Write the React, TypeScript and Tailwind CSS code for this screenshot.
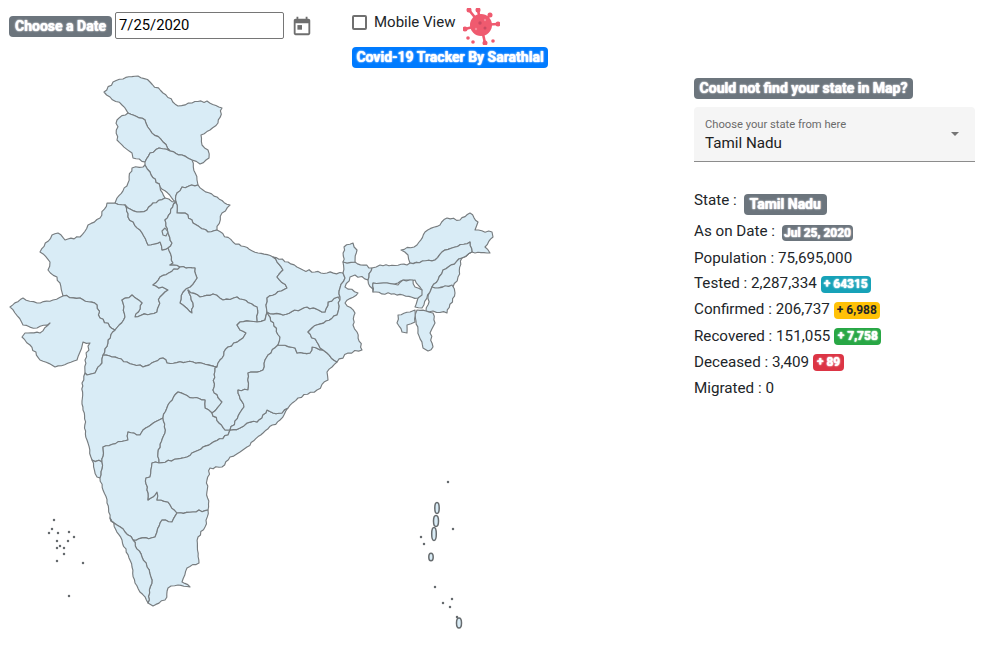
import React from "react";

type P = [number, number];
const parse = (s: string): P[] =>
  s.trim().split(/\s+/).map((t) => t.split(",").map(Number) as P);

const rnd = (a: number, b: number) => {
  const s = Math.sin(a * 12.9898 + b * 78.233) * 43758.5453;
  return s - Math.floor(s);
};

function edge(p: P, q: P): P[] {
  const rev = p[0] > q[0] || (p[0] === q[0] && p[1] > q[1]);
  const [a, b] = rev ? [q, p] : [p, q];
  const dx = b[0] - a[0];
  const dy = b[1] - a[1];
  const d = Math.hypot(dx, dy);
  const n = Math.max(1, Math.floor(d / 3));
  const out: P[] = [];
  for (let i = 1; i < n; i++) {
    const t = i / n;
    const o = (rnd(a[0] + b[0] * 3 + i, a[1] + b[1] * 7 + i) - 0.5) * 2.2;
    out.push([a[0] + dx * t - (dy / d) * o, a[1] + dy * t + (dx / d) * o]);
  }
  return rev ? out.reverse() : out;
}

function toPath(s: string) {
  const pts = parse(s);
  let d = `M${pts[0][0]} ${pts[0][1]}`;
  pts.forEach((p, i) => {
    const q = pts[(i + 1) % pts.length];
    edge(p, q).forEach((m) => (d += `L${m[0].toFixed(1)} ${m[1].toFixed(1)}`));
    d += `L${q[0]} ${q[1]}`;
  });
  return d + "Z";
}

const states: string[] = [
  // Ladakh / J&K
  "104,92 113,82 123,79 138,76 150,82 163,93 178,106 192,103 207,101 222,108 218,123 210,130 201,135 202,145 208,150 209,158 200,164 192,160 182,155 170,151 163,142 150,130 145,120 128,113 122,105 110,97",
  // J&K lower
  "128,113 145,120 150,130 163,142 170,151 159,148 150,153 145,162 133,158 132,153 117,140 117,120",
  // Himachal
  "150,153 159,148 170,151 182,155 192,160 197,180 198,185 182,187 177,193 176,202 160,187 150,172 145,165 145,162",
  // Punjab
  "145,165 150,172 160,187 165,198 153,203 147,210 137,212 125,205 115,203 117,198 128,183 132,168 143,167",
  // Uttarakhand
  "176,202 177,193 182,187 198,185 203,190 217,197 230,205 222,213 217,230 208,232 193,223 185,213 177,213",
  // Rajasthan
  "115,203 107,203 100,218 88,225 80,237 65,240 58,233 52,235 40,252 50,262 48,270 57,277 63,296 80,298 97,305 100,318 115,330 125,317 122,300 132,295 142,303 135,317 157,312 160,297 168,290 153,285 160,277 180,267 170,265 173,263 168,248 162,250 160,242 148,245 140,230 128,217 125,205",
  // Haryana
  "125,205 137,212 147,210 153,203 165,198 176,202 165,220 172,243 168,248 162,250 160,242 148,245 140,230 128,217",
  // Uttar Pradesh
  "176,202 177,213 185,213 193,223 208,232 217,230 233,242 258,253 273,257 283,270 277,277 287,288 267,298 267,312 265,320 257,322 257,307 237,297 223,300 213,294 200,297 188,290 193,303 192,313 180,303 183,292 190,287 197,278 195,268 180,267 170,265 173,263 168,248 172,243 165,220",
  // Madhya Pradesh
  "115,330 125,317 122,300 132,295 142,303 135,317 157,312 160,297 168,290 153,285 160,277 180,267 195,268 197,278 190,287 183,292 180,303 192,313 193,303 188,290 200,297 213,294 223,300 237,297 257,307 257,322 240,322 237,325 240,330 246,333 243,338 240,340 228,347 220,360 217,367 193,362 167,363 163,358 143,367 127,362 112,357 103,355 108,340",
  // Gujarat
  "10,307 23,298 37,303 53,300 63,296 80,298 97,305 100,318 115,330 108,340 103,355 102,363 95,373 87,375 85,373 85,360 90,343 83,342 80,352 77,360 55,367 40,360 30,345 22,337 25,333 40,333 50,323 37,328 23,325 15,313",
  // Maharashtra
  "103,355 112,357 127,362 143,367 163,358 167,363 193,362 217,367 215,368 213,390 222,402 212,413 205,408 205,400 193,398 178,392 168,405 163,418 143,430 140,435 128,432 128,440 103,447 102,462 92,460 87,440 83,410 82,383 85,373 87,375 95,373 102,363",
  // Goa
  "92,460 102,462 100,478 97,477",
  // Karnataka
  "100,478 107,503 110,518 125,532 133,540 155,537 157,532 162,520 172,522 177,513 168,502 157,500 157,492 148,500 147,490 146,478 150,477 152,463 159,463 158,453 165,433 163,418 143,430 140,435 128,432 128,440 103,447 102,462",
  // Telangana
  "212,413 205,408 205,400 193,398 178,392 168,405 163,418 165,433 158,453 159,463 187,457 203,447 228,435 230,430 225,430",
  // Andhra Pradesh
  "159,463 187,457 203,447 228,435 230,430 240,428 247,423 257,422 267,410 273,413 282,413 288,408 280,420 263,433 247,447 240,452 230,457 222,467 210,468 207,480 208,510 193,512 177,513 168,502 157,500 157,492 148,500 147,490 146,478 150,477 152,463",
  // Tamil Nadu
  "177,513 193,512 208,510 205,527 198,537 199,563 187,568 182,582 190,587 178,585 168,588 165,600 153,606 148,603 152,580 147,567 142,557 133,540 155,537 157,532 162,520 172,522",
  // Kerala
  "110,518 122,540 132,567 135,583 148,603 152,580 147,567 142,557 133,540 125,532",
  // Chhattisgarh
  "267,312 280,337 278,345 268,355 265,360 263,370 248,373 248,390 238,390 244,407 230,430 225,430 212,413 222,402 213,390 215,368 217,367 220,360 228,347 240,340 243,338 246,333 240,330 237,325 240,322 257,322 265,320",
  // Odisha
  "278,345 295,348 297,353 310,353 312,347 323,350 327,353 337,362 327,372 328,380 317,390 298,398 288,408 282,413 273,413 267,410 257,422 247,423 240,428 230,430 244,407 238,390 248,390 248,373 263,370 265,360 268,355",
  // Jharkhand
  "267,312 283,315 307,307 325,312 328,302 338,297 340,300 337,315 312,328 308,332 323,350 312,347 310,353 297,353 295,348 278,345 280,337",
  // Bihar
  "273,257 288,262 303,270 327,273 343,273 345,278 340,288 340,297 338,297 328,302 325,312 307,307 283,315 267,312 267,298 287,288 277,277 283,270",
  // West Bengal
  "343,273 343,262 347,263 355,262 372,268 368,280 355,275 350,277 345,287 358,293 345,303 355,313 353,325 357,332 362,350 348,353 337,362 327,353 323,350 308,332 312,328 337,315 340,300 340,297 340,288 345,278",
  // Sikkim
  "343,262 344,247 353,243 357,250 355,262 347,263",
  // Arunachal
  "410,263 408,255 401,250 417,245 425,232 440,225 447,218 460,220 470,213 478,222 475,230 492,232 493,237 485,247 490,253 472,252 470,242 442,252 435,260",
  // Assam
  "372,268 380,265 407,265 410,263 435,260 442,252 470,242 472,252 462,258 443,270 438,280 432,287 430,292 422,308 415,307 418,298 422,290 415,280 407,280 398,283 387,283 373,283 373,292 368,280",
  // Meghalaya
  "373,283 387,283 398,285 403,280 413,280 415,287 422,290 422,295 418,298 403,295 373,292",
  // Nagaland
  "472,252 462,258 458,277 453,287 435,288 432,287 438,280 443,270 462,258",
  // Manipur
  "435,288 452,285 455,293 447,313 433,311 426,311 430,292 432,287",
  // Mizoram
  "417,310 426,311 433,313 435,323 430,333 433,347 428,351 423,348 418,330 415,315",
  // Tripura
  "398,315 410,312 415,310 415,322 407,325 407,333 402,332 397,323",
  // Delhi
  "162,231 165,228 168,232 166,236 163,235",
];

const dots: P[] = [
  [54, 520], [52, 529], [58, 533], [49, 533], [69, 532], [74, 537], [57, 541], [68, 541],
  [60, 546], [57, 548], [64, 548], [64, 554], [57, 561], [83, 563], [69, 596],
  [448, 482], [421, 537], [424, 544], [453, 529], [435, 587], [452, 599], [443, 603],
  [450, 607], [457, 617],
];
const isles: [number, number, number, number][] = [
  [437, 508, 2.2, 5.5], [436, 521, 2.5, 5.5], [434, 534, 2.3, 6.5], [431, 557, 2.2, 3.8], [459, 623, 2.5, 5],
];

function IndiaMap() {
  return (
    <svg viewBox="0 72 510 570" className="block w-[510px] h-[570px] [filter:blur(0.35px)]">
      <g fill="#d9ecf6" stroke="#777c7f" strokeWidth="1.15" strokeLinejoin="round">
        {states.map((s, i) => (
          <path key={i} d={toPath(s)} />
        ))}
        {isles.map(([x, y, rx, ry], i) => (
          <ellipse key={i} cx={x} cy={y} rx={rx} ry={ry} strokeWidth="1.5" stroke="#666b6e" />
        ))}
      </g>
      <g fill="#666b6e">
        {dots.map(([x, y], i) => (
          <circle key={i} cx={x} cy={y} r="1.25" />
        ))}
      </g>
    </svg>
  );
}

function Virus() {
  const linked: P[] = [[6, 2], [15, 2], [27, 7], [35, 16], [22, 35], [2, 21]];
  const free: P[] = [[30, 33], [5, 30], [10, 34]];
  return (
    <svg viewBox="0 0 37 37" className="block w-[37px] h-[37px] shrink-0">
      {linked.map(([x, y], i) => (
        <g key={i}>
          <line x1="18" y1="17" x2={x} y2={y} stroke="#ef5a6f" strokeWidth="2.6" />
          <circle cx={x} cy={y} r="2.5" fill="#ef5a6f" />
        </g>
      ))}
      {free.map(([x, y], i) => (
        <circle key={i} cx={x} cy={y} r="1.8" fill="#ef5a6f" />
      ))}
      <circle cx="18" cy="17" r="11" fill="#ef5a6f" />
      <circle cx="17" cy="15" r="1.7" fill="#c94a62" />
      <circle cx="22" cy="20" r="1.5" fill="#c94a62" />
      <circle cx="13" cy="21" r="1.2" fill="#f58a99" />
      <circle cx="22" cy="12" r="1.2" fill="#f58a99" />
    </svg>
  );
}

const glow = "[text-shadow:0_0_1px_#ffffff,0_0_2px_#ffffff]";

function Row({ className, children }: { className?: string; children: React.ReactNode }) {
  return <div className={`flex items-center text-[15.2px] leading-[18px] text-[#212529] ${className ?? ""}`}>{children}</div>;
}

export default function App() {
  return (
    <div className="w-[986px] h-[650px] bg-white overflow-hidden font-['Roboto',sans-serif] text-[#212529]">
      <div className="flex h-[72px]">
        <div className="w-[352px] flex items-start pl-[9px] pt-[12px] shrink-0">
          <span className={`mt-[4px] h-[21px] w-[103px] rounded-[4px] bg-[#6c757d] text-white font-bold text-[14px] leading-[21px] text-center ${glow}`}>
            Choose a Date
          </span>
          <div className="ml-[3px] w-[169px] h-[27px] border border-[#767676] rounded-[2px] text-[14.8px] leading-[25px] pl-[3px] text-black">
            7/25/2020
          </div>
          <svg viewBox="0 0 24 24" className="ml-[7px] mt-[3px] w-[22px] h-[22px]" fill="#6e6e6e">
            <path d="M19 4h-1V2h-2v2H8V2H6v2H5C3.9 4 3 4.9 3 6v14c0 1.1.9 2 2 2h14c1.1 0 2-.9 2-2V6c0-1.1-.9-2-2-2zm0 16H5V9h14z" />
            <rect x="7" y="11" width="5" height="5" />
          </svg>
        </div>
        <div className="flex flex-col items-start">
          <div className="flex items-start pt-[8px] h-[47px]">
            <span className="mt-[7px] w-[15px] h-[15px] border-2 border-[#707070] rounded-[2px]" />
            <span className="ml-[7px] mt-[5px] text-[15px] leading-[18px] text-[#212529] w-[82px] whitespace-nowrap">Mobile View</span>
            <span className="ml-[7px]"><Virus /></span>
          </div>
          <span className={`h-[21px] w-[196px] rounded-[4px] bg-[#007bff] text-white font-bold text-[14px] leading-[21px] text-center ${glow}`}>
            Covid-19 Tracker By Sarathlal
          </span>
        </div>
      </div>
      <div className="flex">
        <div className="w-[694px] shrink-0">
          <IndiaMap />
        </div>
        <div className="w-[281px] pt-[6px]">
          <span className={`block h-[21px] w-[219px] rounded-[4px] bg-[#6c757d] text-white font-bold text-[14px] leading-[21px] text-center ${glow}`}>
            Could not find your state in Map?
          </span>
          <div className="relative mt-[8px] h-[55px] bg-[#f5f5f5] rounded-t-[4px] border-b border-[#8c8c8c] pl-[11px]">
            <div className="pt-[11px] text-[11.2px] leading-[13px] text-[#6b6b6b]">Choose your state from here</div>
            <div className="mt-[3px] text-[15.2px] leading-[19px] text-[#212121]">Tamil Nadu</div>
            <span className="absolute right-[16px] top-[25px] w-0 h-0 border-x-[4px] border-x-transparent border-t-[4px] border-t-[#757575]" />
          </div>
          <div className="mt-[32px]">
            <Row className="h-[21px]">
              <span className="-mt-[9px]">State :</span>
              <span className={`ml-[7px] h-[21px] w-[83px] rounded-[4px] bg-[#6c757d] text-white font-bold text-[14px] leading-[21px] text-center ${glow}`}>Tamil Nadu</span>
            </Row>
            <Row className="mt-[10px] h-[16px]">
              <span className="-mt-[4px]">As on Date :</span>
              <span className={`ml-[7px] h-[16px] w-[71px] rounded-[4px] bg-[#6c757d] text-white font-bold text-[12px] leading-[16px] text-center ${glow}`}>Jul 25, 2020</span>
            </Row>
            <Row className="mt-[8px] h-[18px]">Population : 75,695,000</Row>
            <Row className="mt-[8px] h-[18px]">
              <span className="-mt-[3px]">Tested : 2,287,334</span>
              <span className={`ml-[4px] h-[17px] w-[50px] rounded-[4px] bg-[#17a2b8] text-white font-bold text-[12px] leading-[17px] text-center ${glow}`}>+ 64315</span>
            </Row>
            <Row className="mt-[8px] h-[18px]">
              <span className="-mt-[3px]">Confirmed : 206,737</span>
              <span className="ml-[4px] mt-[1px] h-[17px] w-[46px] rounded-[4px] bg-[#ffc107] text-[#212529] font-bold text-[12px] leading-[17px] text-center">+ 6,988</span>
            </Row>
            <Row className="mt-[8px] h-[18px]">
              <span className="-mt-[1px]">Recovered : 151,055</span>
              <span className={`ml-[4px] mt-[1px] h-[17px] w-[47px] rounded-[4px] bg-[#28a745] text-white font-bold text-[12px] leading-[17px] text-center ${glow}`}>+ 7,758</span>
            </Row>
            <Row className="mt-[8px] h-[18px]">
              <span className="-mt-[1px]">Deceased : 3,409</span>
              <span className={`ml-[4px] mt-[1px] h-[17px] w-[31px] rounded-[4px] bg-[#dc3545] text-white font-bold text-[12px] leading-[17px] text-center ${glow}`}>+ 89</span>
            </Row>
            <Row className="mt-[8px] h-[18px]">Migrated : 0</Row>
          </div>
        </div>
      </div>
    </div>
  );
}
